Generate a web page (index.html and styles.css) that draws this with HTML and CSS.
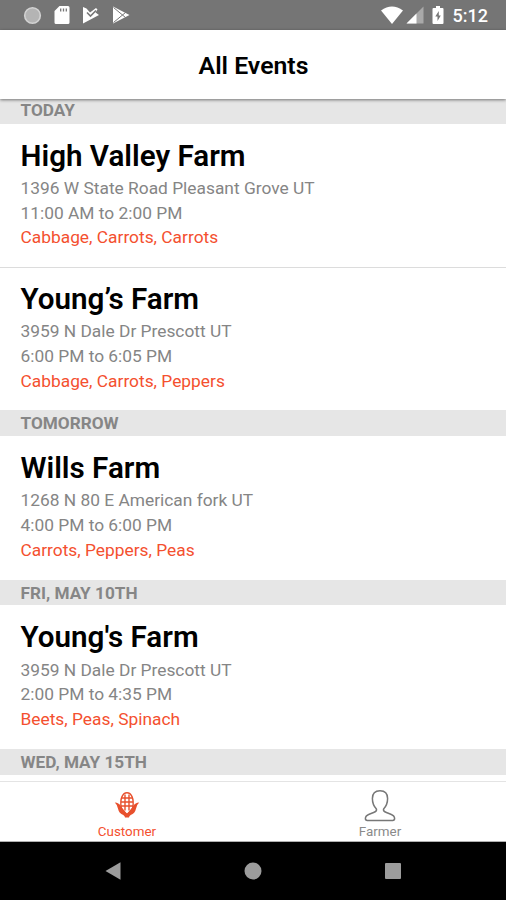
FILE: index.html
```html
<!DOCTYPE html>
<html lang="en">
<head>
    <meta charset="UTF-8">
    <meta name="viewport" content="width=device-width, initial-scale=1.0">
    <title>All Events</title>
    <link rel="stylesheet" href="styles.css">
</head>
<body>
    <div class="screen">
        <div class="status-bar">
            <div class="status-left">
                <svg width="20" height="20" viewBox="0 0 20 20"><circle cx="10.500" cy="10.500" r="7.800" fill="#b4b4b4" stroke="#d2d2d2" stroke-width="1.600"/></svg>
                <svg width="16" height="20" viewBox="0 0 16 20"><path d="M5.500 1H14a1.500 1.500 0 0 1 1.500 1.500v15A1.500 1.500 0 0 1 14 19H2a1.500 1.500 0 0 1-1.500-1.500V6z" fill="#fff"/><path d="M6.700 3.500v3M9.500 3.500v3M12.300 3.500v3" stroke="#777" stroke-width="1.300"/></svg>
                <svg width="18" height="20" viewBox="0 0 18 20"><path d="M1 2L4.500 3.500 8 7.500 14 3l1.500 1.500-2 3L17 10 1 18.500z" fill="#fff"/><path d="M5 7.500l3.500 3.500 5.500-5.500" fill="none" stroke="#777" stroke-width="1.600"/></svg>
                <svg width="18" height="20" viewBox="0 0 18 20"><path d="M1 1.500L17.500 10 1 18.500z" fill="#fff"/><path d="M1.500 2.500l12 10M1.500 17.500l12-10" stroke="#777" stroke-width="1"/></svg>
            </div>
            <div class="status-right">
                <svg class="wifi" width="24" height="20" viewBox="0 0 24 20"><path d="M1 5.500Q12-2.500 23 5.500L12 19z" fill="#fff"/></svg>
                <svg class="signal" width="18" height="18" viewBox="0 0 18 18"><path d="M17.500.5v17H.5z" fill="#a9a9a9"/><path d="M10.500 7.500v10H.5z" fill="#fff"/></svg>
                <svg class="battery" width="12" height="20" viewBox="0 0 12 20"><path d="M4 1h4v2h2.500q1 0 1 1v14q0 1-1 1h-9q-1 0-1-1V4q0-1 1-1H4z" fill="#fff"/><path d="M6.800 6L3.300 11.500h2.200V16l3.300-5.500H6.800z" fill="#777"/></svg>
                <span class="clock">5:12</span>
            </div>
        </div>

        <header class="header">
            <h1>All Events</h1>
        </header>

        <main class="event-list">
            <div class="section-title first">TODAY</div>
            <div class="event">
                <h2>High Valley Farm</h2>
                <p>1396 W State Road Pleasant Grove UT</p>
                <p>11:00 AM to 2:00 PM</p>
                <p class="products">Cabbage, Carrots, Carrots</p>
            </div>
            <div class="event">
                <h2>Young’s Farm</h2>
                <p>3959 N Dale Dr Prescott UT</p>
                <p>6:00 PM to 6:05 PM</p>
                <p class="products">Cabbage, Carrots, Peppers</p>
            </div>
            <div class="section-title">TOMORROW</div>
            <div class="event">
                <h2>Wills Farm</h2>
                <p>1268 N 80 E American fork UT</p>
                <p>4:00 PM to 6:00 PM</p>
                <p class="products">Carrots, Peppers, Peas</p>
            </div>
            <div class="section-title">FRI, MAY 10TH</div>
            <div class="event">
                <h2>Young's Farm</h2>
                <p>3959 N Dale Dr Prescott UT</p>
                <p>2:00 PM to 4:35 PM</p>
                <p class="products">Beets, Peas, Spinach</p>
            </div>
            <div class="section-title">WED, MAY 15TH</div>
        </main>

        <nav class="tab-bar">
            <a class="tab active">
                <svg width="34" height="34" viewBox="0 0 34 34">
                    <path d="M11.300 20C9.500 10 13 4.800 17 4.800S24.500 10 22.700 20L17 27z" fill="#fff" stroke="#e8502d" stroke-width="1.400"/>
                    <path d="M15 6.500v16M19 6.500v16M12 10h10M11 14h12M11 18h12" stroke="#e8502d" stroke-width="1.400"/>
                    <path d="M4.800 14.500q4 0 6 3.500 2 5 6.200 7.500 4.200-2.500 6.200-7.500 2-3.500 6-3.500-2.500 2-3.300 6.500-.9 4.500-5.200 6-1.700 1-1.700 2.500h-4q0-1.500-1.700-2.500-4.300-1.500-5.200-6-.8-4.500-3.300-6.500z" fill="#e8502d"/>
                </svg>
                <span>Customer</span>
            </a>
            <a class="tab">
                <svg width="34" height="34" viewBox="0 0 34 34">
                    <path d="M17 2.700c-4.800 0-7.600 3-7.600 7.800 0 5 1.800 8.200 4 10.500.5 1.500-.2 2.500-2.200 3.300l-5 2c-2.600 1-3.800 2.500-3.800 4.300 0 1.200.7 1.900 1.900 1.900h25.400c1.200 0 1.900-.7 1.900-1.900 0-1.800-1.200-3.300-3.800-4.300l-5-2c-2-.8-2.700-1.800-2.200-3.300 2.200-2.300 4-5.500 4-10.500 0-4.800-2.800-7.800-7.600-7.800z" fill="none" stroke="#777" stroke-width="1.500" stroke-linejoin="round"/>
                </svg>
                <span>Farmer</span>
            </a>
        </nav>

        <div class="nav-bar">
            <svg width="18" height="20" viewBox="0 0 18 20"><path d="M1.500 10L16.500 1.200v17.600z" fill="#9c9c9c"/></svg>
            <svg width="18" height="18" viewBox="0 0 18 18"><circle cx="9" cy="9" r="8.500" fill="#9c9c9c"/></svg>
            <svg width="18" height="18" viewBox="0 0 18 18"><rect x="1" y="1" width="16" height="16" rx="1" fill="#9c9c9c"/></svg>
        </div>
    </div>
</body>
</html>
```

FILE: styles.css
```css
* {
    box-sizing: border-box;
}
body {
    margin: 0;
    font-family: Roboto, "Liberation Sans", sans-serif;
    background-color: #fff;
}
h1, h2, p {
    margin: 0;
}
svg {
    display: block;
    flex-shrink: 0;
}
.screen {
    display: flex;
    flex-direction: column;
    width: 506px;
    height: 900px;
    overflow: hidden;
}
.status-bar {
    display: flex;
    justify-content: space-between;
    height: 30px;
    flex-shrink: 0;
    padding: 0 18px 0 22px;
    background-color: #757575;
}
.status-left {
    display: flex;
    align-items: center;
    gap: 12px;
}
.status-right {
    display: flex;
    align-items: center;
}
.wifi {
    margin-right: 2px;
}
.signal {
    margin-right: 8px;
}
.battery {
    margin-right: 9px;
}
.clock {
    padding-top: 1px;
    color: #fff;
    font-size: 18px;
    font-weight: 500;
}
.header {
    display: flex;
    align-items: center;
    justify-content: center;
    height: 69px;
    flex-shrink: 0;
    padding: 2px 0 0 1px;
    background-color: #fff;
    box-shadow: 0 1px 3px rgba(0,0,0,0.5);
    z-index: 1;
}
.header h1 {
    font-size: 24.800px;
    font-weight: 600;
    line-height: 28px;
    color: #000;
}
.event-list {
    flex: 1;
    overflow: hidden;
}
.section-title {
    height: 25.900px;
    padding-left: 20.500px;
    background-color: #e6e6e6;
    color: #868686;
    font-size: 17.200px;
    font-weight: 700;
    line-height: 26px;
}
.section-title.first {
    height: 24.500px;
    line-height: 23px;
}
.event {
    height: 143.400px;
    padding: 14px 20.500px 0;
}
.event + .event {
    padding-top: 13px;
    border-top: 1px solid #dcdcdc;
}
.event h2 {
    padding-bottom: 1.300px;
    font-size: 29.600px;
    font-weight: 600;
    line-height: 37px;
    color: #000;
}
.event p {
    font-size: 17.350px;
    line-height: 24.700px;
    color: #858585;
}
.event .products {
    color: #f4502f;
}
.tab-bar {
    display: flex;
    height: 61px;
    flex-shrink: 0;
    border-top: 1px solid #e4e4e4;
    border-bottom: 1px solid #b0b0b0;
}
.tab {
    display: flex;
    flex: 1;
    flex-direction: column;
    align-items: center;
    padding: 6px 0 0 1px;
    color: #8a8a8a;
    font-size: 13.400px;
    line-height: 19px;
}
.tab.active {
    color: #f4502f;
}
.nav-bar {
    display: flex;
    align-items: center;
    justify-content: space-between;
    height: 58px;
    flex-shrink: 0;
    padding: 0 104px;
    background-color: #000;
}
```
